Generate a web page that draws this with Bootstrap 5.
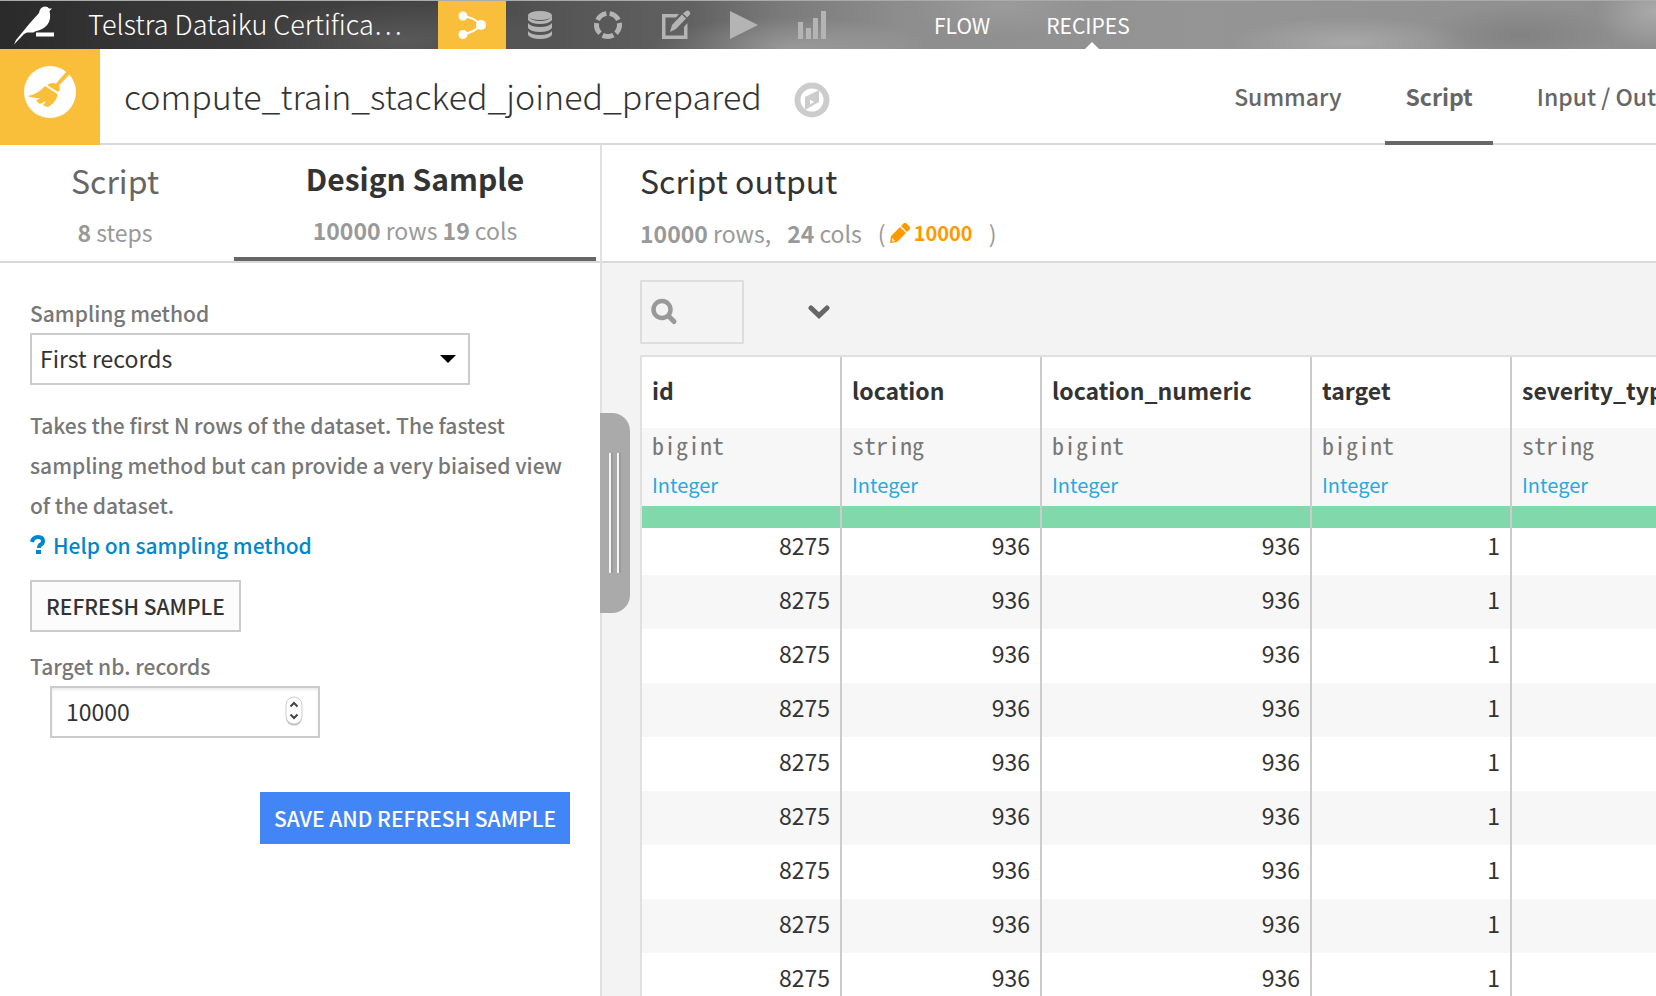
<!DOCTYPE html>
<html lang="en">
<head>
<meta charset="utf-8">
<meta name="viewport" content="width=device-width, initial-scale=1">
<title>compute_train_stacked_joined_prepared</title>
<link rel="stylesheet" href="https://cdn.jsdelivr.net/npm/bootstrap@5.3.0/dist/css/bootstrap.min.css">
<style>
  :root { --ink: #333; --tab: #666; --muted: #999; --soft: #777; --rule: #d9d9d9; --amber: #f9be3a; }
  body { font-family: "Noto Sans CJK SC", "Noto Sans CJK JP", sans-serif; font-size: 21px; line-height: 40px; color: var(--ink); }
  a { text-decoration: none; }
  .app { height: 100vh; }

  /* top bar */
  .topbar { height: 49px; border-top: 1px solid #aaa;
    background:
      radial-gradient(ellipse 160px 40px at 400px 40px, rgba(255,255,255,.12), transparent),
      radial-gradient(ellipse 140px 30px at 790px 46px, rgba(255,255,255,.22), transparent),
      radial-gradient(ellipse 90px 30px at 1000px 6px, rgba(255,255,255,.1), transparent),
      radial-gradient(ellipse 120px 26px at 1350px 42px, rgba(255,255,255,.2), transparent),
      radial-gradient(ellipse 100px 30px at 1520px 34px, rgba(0,0,0,.1), transparent),
      radial-gradient(ellipse 60px 40px at 1656px 10px, rgba(255,255,255,.25), transparent),
      linear-gradient(90deg, #2a2a2a 0, #353535 130px, #444 430px, #555 560px, #616161 690px, #7a7a7a 780px, #8d8d8d 900px, #959595 1200px, #8e8e8e 100%); }
  .project { width: 350px; font-size: 27px; line-height: 46px; color: #fff; font-weight: 300; }
  .appicon { width: 68px; color: #b4b4b4; }
  .appicon.active { background: var(--amber); color: #fff; }
  .toplink { color: #fff; }
  .toplink.active::after { content: ""; position: absolute; bottom: 0; left: 50%; margin-left: -3px; border: 7px solid transparent; border-top: 0; border-bottom-color: #fff; }

  /* recipe header */
  .recipe { height: 96px; border-bottom: 2px solid var(--rule); }
  .recipe-icon { width: 100px; height: 96px; background: var(--amber); }
  .recipe-name { font-size: 34px; font-weight: 300; line-height: 48px; }
  .recipe-tabs { margin-right: -58px; font-size: 23px; font-weight: 500; }
  .rtab { padding: 27px 20px 0; height: 96px; color: var(--tab); border-bottom: 4px solid transparent; }
  .rtab.active { font-weight: 700; border-color: #666; }

  /* left panel */
  .side { width: 602px; border-right: 2px solid #e0e0e0; }
  .panel-head { height: 118px; border-bottom: 2px solid var(--rule); font-size: 23px; }
  .stab { color: var(--muted); height: 116px; padding-top: 11px; }
  .stab-title { font-size: 32px; line-height: 44px; color: var(--tab); margin-bottom: 10px; }
  .stab-script { width: 234px; padding: 13px 4px 0 0; }
  .stab-sample { width: 362px; border-bottom: 4px solid #666; }
  .stab-sample .stab-title { font-size: 30px; font-weight: 700; color: var(--ink); }
  .side-body { padding: 30px; color: var(--soft); font-weight: 500; }
  .box { height: 52px; border: 2px solid #ccc; border-radius: 0; color: var(--ink); font-size: 23px; line-height: 40px; background-color: #fff; }
  .box-select { width: 440px; padding: 3px 8px 5px; background-position: right 12px center; background-size: 16px 8px;
    background-image: url("data:image/svg+xml,%3Csvg xmlns='http://www.w3.org/2000/svg' viewBox='0 0 16 8'%3E%3Cpath d='M0 0h16L8 8z'/%3E%3C/svg%3E"); }
  .box-number { width: 270px; padding: 3px 14px 5px; box-shadow: inset 0 2px 3px rgba(0,0,0,.08); appearance: textfield; }
  .box-number::-webkit-inner-spin-button { display: none; }
  .number-field { margin-left: 20px; }
  .spin { position: absolute; right: 17px; top: 10px; }
  .help { color: #0088cc; }
  .btn { --bs-btn-border-radius: 0; font-size: 21px; line-height: 46px; height: 52px; padding: 0 14px; }
  .btn-plain { border: 2px solid #ccc; background: #fcfcfc; color: var(--ink); margin: 15px 0 14px; font-weight: 500; }
  .btn-save { background: #4285f6; color: #fff; border: 0; line-height: 50px; font-weight: 500; }
  .save-row { margin-top: 54px; }

  /* right panel */
  .out { min-width: 0; background: #f3f3f3; }
  .out-head { padding: 13px 38px 0; }
  .out-title { font-size: 32px; line-height: 44px; margin-bottom: 11px; font-weight: 400; }
  .counts { color: var(--muted); line-height: 40px; }
  .edited { color: #ff9900; font-size: 20px; }
  .filters { padding: 17px 38px 11px; }
  .search { width: 104px; height: 64px; border: 2px solid #ddd; }
  .search input { min-width: 0; }
  .grid-wrap { margin-left: 38px; border: 2px solid #e0e0e0; border-width: 2px 0 0 2px; background: #fff; }
  .grid-table { table-layout: fixed; width: 1140px; border-collapse: separate; border-spacing: 0; }
  .grid-table th, .grid-table td { border-right: 2px solid #ccc; }
  .grid-table th { padding: 0; line-height: 40px; }
  .col-name { height: 71px; padding: 13px 10px 0; font-weight: 700; font-size: 23px; }
  .col-meta { height: 78px; padding: 0 10px; background: #f7f7f7; font-weight: 400; }
  .col-type { font: 24px/34px "Noto Sans Mono CJK SC", "Liberation Mono", monospace; color: var(--soft); }
  .col-sense { color: #28a9dd; font-size: 20px; line-height: 46px; }
  .col-valid { position: relative; height: 22px; background: #81d8ab; }
  .grid-table td { padding: 4px 10px 10px; text-align: right; font-size: 23px; line-height: 40px; }
  .grid-table tbody tr:first-child td { padding: 0 10px 13px; line-height: 34px; }
  .grid-table tbody tr:nth-child(even) td { background: #f7f7f7; }

  .handle { position: absolute; left: 600px; top: 268px; width: 30px; height: 200px; border: 0; padding: 0; background: #aaa; border-radius: 0 18px 18px 0; }
  .handle i { width: 4px; height: 120px; border-left: 2px solid #f5f5f5; border-right: 2px solid #999; }
</style>
</head>
<body>
<div class="app d-flex flex-column overflow-hidden">
  <nav class="topbar d-flex flex-shrink-0 overflow-hidden">
    <a href="#" class="d-flex align-items-center ps-2 flex-shrink-0" aria-label="Home">
      <svg width="56" height="46" viewBox="8 2 56 46" fill="#fff"><path d="M14 44.500 L16 40 L30 23 L39 13 Q40 6.500 45 6.500 Q48 6.500 49 8.500 L52 8.500 L49.500 11 Q51 17 49 22 Q46 29 35 31.500 L33.500 32.500 L27 32.500 L24 34 Z M36 32.500h18v4H36Z"/></svg>
    </a>
    <a href="#" class="project d-block text-nowrap ps-4 flex-shrink-0">Telstra Dataiku Certifica…</a>
    <a href="#" class="appicon active d-flex align-items-center justify-content-center ms-4 flex-shrink-0" aria-label="Flow">
      <svg width="30" height="30" viewBox="0 0 30 30" fill="currentColor"><path d="M5 6Q18 7 23 15Q18 23 5 24" fill="none" stroke="currentColor" stroke-width="2.2"/><circle cx="6" cy="6" r="4.500"/><circle cx="24" cy="15" r="5"/><circle cx="6" cy="24.500" r="4.500"/></svg>
    </a>
    <a href="#" class="appicon d-flex align-items-center justify-content-center flex-shrink-0" aria-label="Datasets">
      <svg width="26" height="30" viewBox="0 0 26 30" fill="currentColor"><ellipse cx="13" cy="5.500" rx="12" ry="4.500"/><path d="M1 6v4q3 4 12 4t12-4V6q-3 5-12 5T1 6ZM1 13v5q3 4 12 4t12-4v-5q-3 4-12 4T1 13ZM1 21v4q3 4 12 4t12-4v-4q-3 4-12 4T1 21Z"/></svg>
    </a>
    <a href="#" class="appicon d-flex align-items-center justify-content-center flex-shrink-0" aria-label="Analyses">
      <svg width="30" height="30" viewBox="0 0 30 30"><circle cx="15" cy="15" r="11.500" fill="none" stroke="currentColor" stroke-width="5" pathLength="100" stroke-dasharray="15.500 4.500" transform="rotate(-82 15 15)"/></svg>
    </a>
    <a href="#" class="appicon d-flex align-items-center justify-content-center flex-shrink-0" aria-label="Notebooks">
      <svg width="30" height="30" viewBox="0 0 30 30" fill="currentColor"><path d="M1 4h17l-3 3.500H4.500v18H23V17l3.500-4v16H1ZM9 22l2-7L21 4.500l4 4L15 19ZM22 3.500 24.500 1.500Q27-.5 28.500 1.500Q30 3.500 28.500 5L26 7.500Z"/></svg>
    </a>
    <a href="#" class="appicon d-flex align-items-center justify-content-center flex-shrink-0" aria-label="Jobs">
      <svg width="28" height="30" viewBox="0 0 28 30" fill="currentColor"><path d="M0 1 28 15 0 29Z"/></svg>
    </a>
    <a href="#" class="appicon d-flex align-items-center justify-content-center flex-shrink-0" aria-label="Dashboards">
      <svg width="28" height="30" viewBox="0 0 28 30" fill="currentColor"><path d="M0 12h5v17H0ZM8 18h5v11H8ZM15 8h5v21h-5ZM23 1h5v28h-5Z"/></svg>
    </a>
    <div class="d-flex ms-5 ps-4 pt-1 gap-5">
      <a href="#" class="toplink ms-3">FLOW</a>
      <a href="#" class="toplink active position-relative ms-2">RECIPES</a>
    </div>
  </nav>

  <header class="recipe d-flex flex-shrink-0">
    <div class="recipe-icon d-flex justify-content-center pt-3 flex-shrink-0">
      <svg width="54" height="54" viewBox="0 0 54 54"><circle cx="27" cy="27" r="26" fill="#fff"/><g fill="#f9be3a"><path d="M44 6 47 9 36 20.500Q38 24 35 27L24 20Q28 17 33 18.500Z"/><path d="M22 21 34.500 29Q34 37 25 42L20 40.500 23 36 17 39 13 36 17 33Q9 33 5 31Q15 29 22 21Z"/></g></svg>
    </div>
    <div class="d-flex align-items-center ps-4 gap-4 flex-shrink-0">
      <h1 class="recipe-name mb-0">compute_train_stacked_joined_prepared</h1>
      <svg class="ms-2 mt-2" width="36" height="36" viewBox="0 0 36 36"><circle cx="18" cy="18" r="14.500" fill="none" stroke="#ccc" stroke-width="6"/><path fill="#ccc" fill-rule="evenodd" d="M11 15 25 8V20L11 28ZM16 17.500v5l4-2.500Z"/></svg>
    </div>
    <nav class="recipe-tabs d-flex gap-4 ms-auto flex-shrink-0 text-nowrap">
      <a href="#" class="rtab">Summary</a>
      <a href="#" class="rtab active" aria-current="page">Script</a>
      <a href="#" class="rtab">Input / Output</a>
    </nav>
  </header>

  <main class="d-flex flex-fill position-relative overflow-hidden">
    <section class="side flex-shrink-0 bg-white">
      <div class="panel-head d-flex text-center">
        <a href="#" class="stab stab-script"><div class="stab-title">Script</div><div><strong>8</strong> steps</div></a>
        <a href="#" class="stab stab-sample"><div class="stab-title">Design Sample</div><div><strong>10000</strong> rows <strong>19</strong> cols</div></a>
      </div>
      <form class="side-body" onsubmit="return false">
        <label for="method" class="d-block">Sampling method</label>
        <select id="method" class="form-select box box-select"><option>First records</option></select>
        <p class="mt-3 mb-0 pt-1">Takes the first N rows of the dataset. The fastest sampling method but can provide a very biaised view of the dataset.</p>
        <a href="#" class="help d-flex align-items-center gap-2"><svg width="15" height="20" viewBox="0 0 15 20" fill="none"><path d="M2 7Q3 2 8 2Q13 2 13 6Q13 9 10 10Q9 11 9 13" stroke="#08c" stroke-width="4"/><path d="M6 15h5v4H6Z" fill="#08c"/></svg>Help on sampling method</a>
        <button type="button" class="btn btn-plain">REFRESH SAMPLE</button>
        <label for="target" class="d-block">Target nb. records</label>
        <div class="number-field position-relative d-inline-block">
          <input id="target" type="number" class="form-control box box-number" value="10000">
          <svg class="spin" width="18" height="30" viewBox="0 0 18 30" fill="none"><rect x="1" y="1.500" width="16" height="28" rx="8" fill="#bbb"/><rect x="1" y="1" width="16" height="27" rx="8" fill="#fff" stroke="#ccc"/><path d="M5.500 10.500 9 7l3.500 3.500M5.500 18.500 9 22l3.500-3.500" stroke="#444" stroke-width="2"/></svg>
        </div>
        <div class="save-row text-end"><button type="submit" class="btn btn-save">SAVE AND REFRESH SAMPLE</button></div>
      </form>
    </section>

    <section class="out flex-fill">
      <div class="panel-head out-head bg-white">
        <h2 class="out-title">Script output</h2>
        <div class="counts d-flex align-items-center"><span><strong>10000</strong> rows,</span><span class="ms-3"><strong>24</strong> cols</span><span class="ms-3">(</span>
          <svg class="ms-1 me-1" width="20" height="20" viewBox="0 0 20 20" fill="#f90"><path d="M0 20 1 13 10 4 16 10 7 19ZM11 3 14 0Q15-.5 16 0L20 4Q20.500 5 20 6L17 9Z"/><path d="M2 15 5 18 2.500 18.500Z" fill="#fff"/></svg>
          <strong class="edited">10000</strong><span class="ms-3">)</span></div>
      </div>
      <div class="filters d-flex align-items-center">
        <label class="search d-flex align-items-center px-2">
          <svg class="flex-shrink-0" width="28" height="28" viewBox="0 0 28 28" fill="none" stroke="#999"><circle cx="12" cy="11.500" r="8.500" stroke-width="4.500"/><path d="M19 18.500 24 23.500" stroke-width="5" stroke-linecap="round"/></svg>
          <input type="text" class="form-control border-0 bg-transparent p-0" aria-label="Search">
        </label>
        <button type="button" class="btn border-0 p-0 ms-5 ps-3" aria-label="More"><svg class="d-block" width="24" height="16" viewBox="1 0 24 16" fill="none"><path d="M4 4 12 11.500 20 4" stroke="#666" stroke-width="5" stroke-linecap="round"/></svg></button>
      </div>
      <div class="grid-wrap overflow-hidden">
        <table class="grid-table">
          <colgroup><col style="width:200px"><col style="width:200px"><col style="width:270px"><col style="width:200px"><col style="width:270px"></colgroup>
          <thead><tr id="heads"></tr></thead>
          <tbody id="rows"></tbody>
        </table>
      </div>
    </section>
    <button type="button" class="handle d-flex justify-content-center gap-1 align-items-center" aria-label="Resize panel"><i></i><i></i></button>
  </main>
</div>
<script src="https://cdn.jsdelivr.net/npm/bootstrap@5.3.0/dist/js/bootstrap.bundle.min.js"></script>
<script>
  const columns = [["id", "bigint"], ["location", "string"], ["location_numeric", "bigint"], ["target", "bigint"], ["severity_type", "string"]];
  document.getElementById("heads").innerHTML = columns.map(([name, type]) =>
    `<th scope="col"><div class="col-name">${name}</div><div class="col-meta"><div class="col-type">${type}</div><div class="col-sense">Integer</div></div><div class="col-valid"></div></th>`).join("");
  const record = ["8275", "936", "936", "1", ""];
  document.getElementById("rows").innerHTML = Array(9).fill(
    "<tr>" + record.map(v => `<td>${v}</td>`).join("") + "</tr>").join("");
</script>
</body>
</html>
